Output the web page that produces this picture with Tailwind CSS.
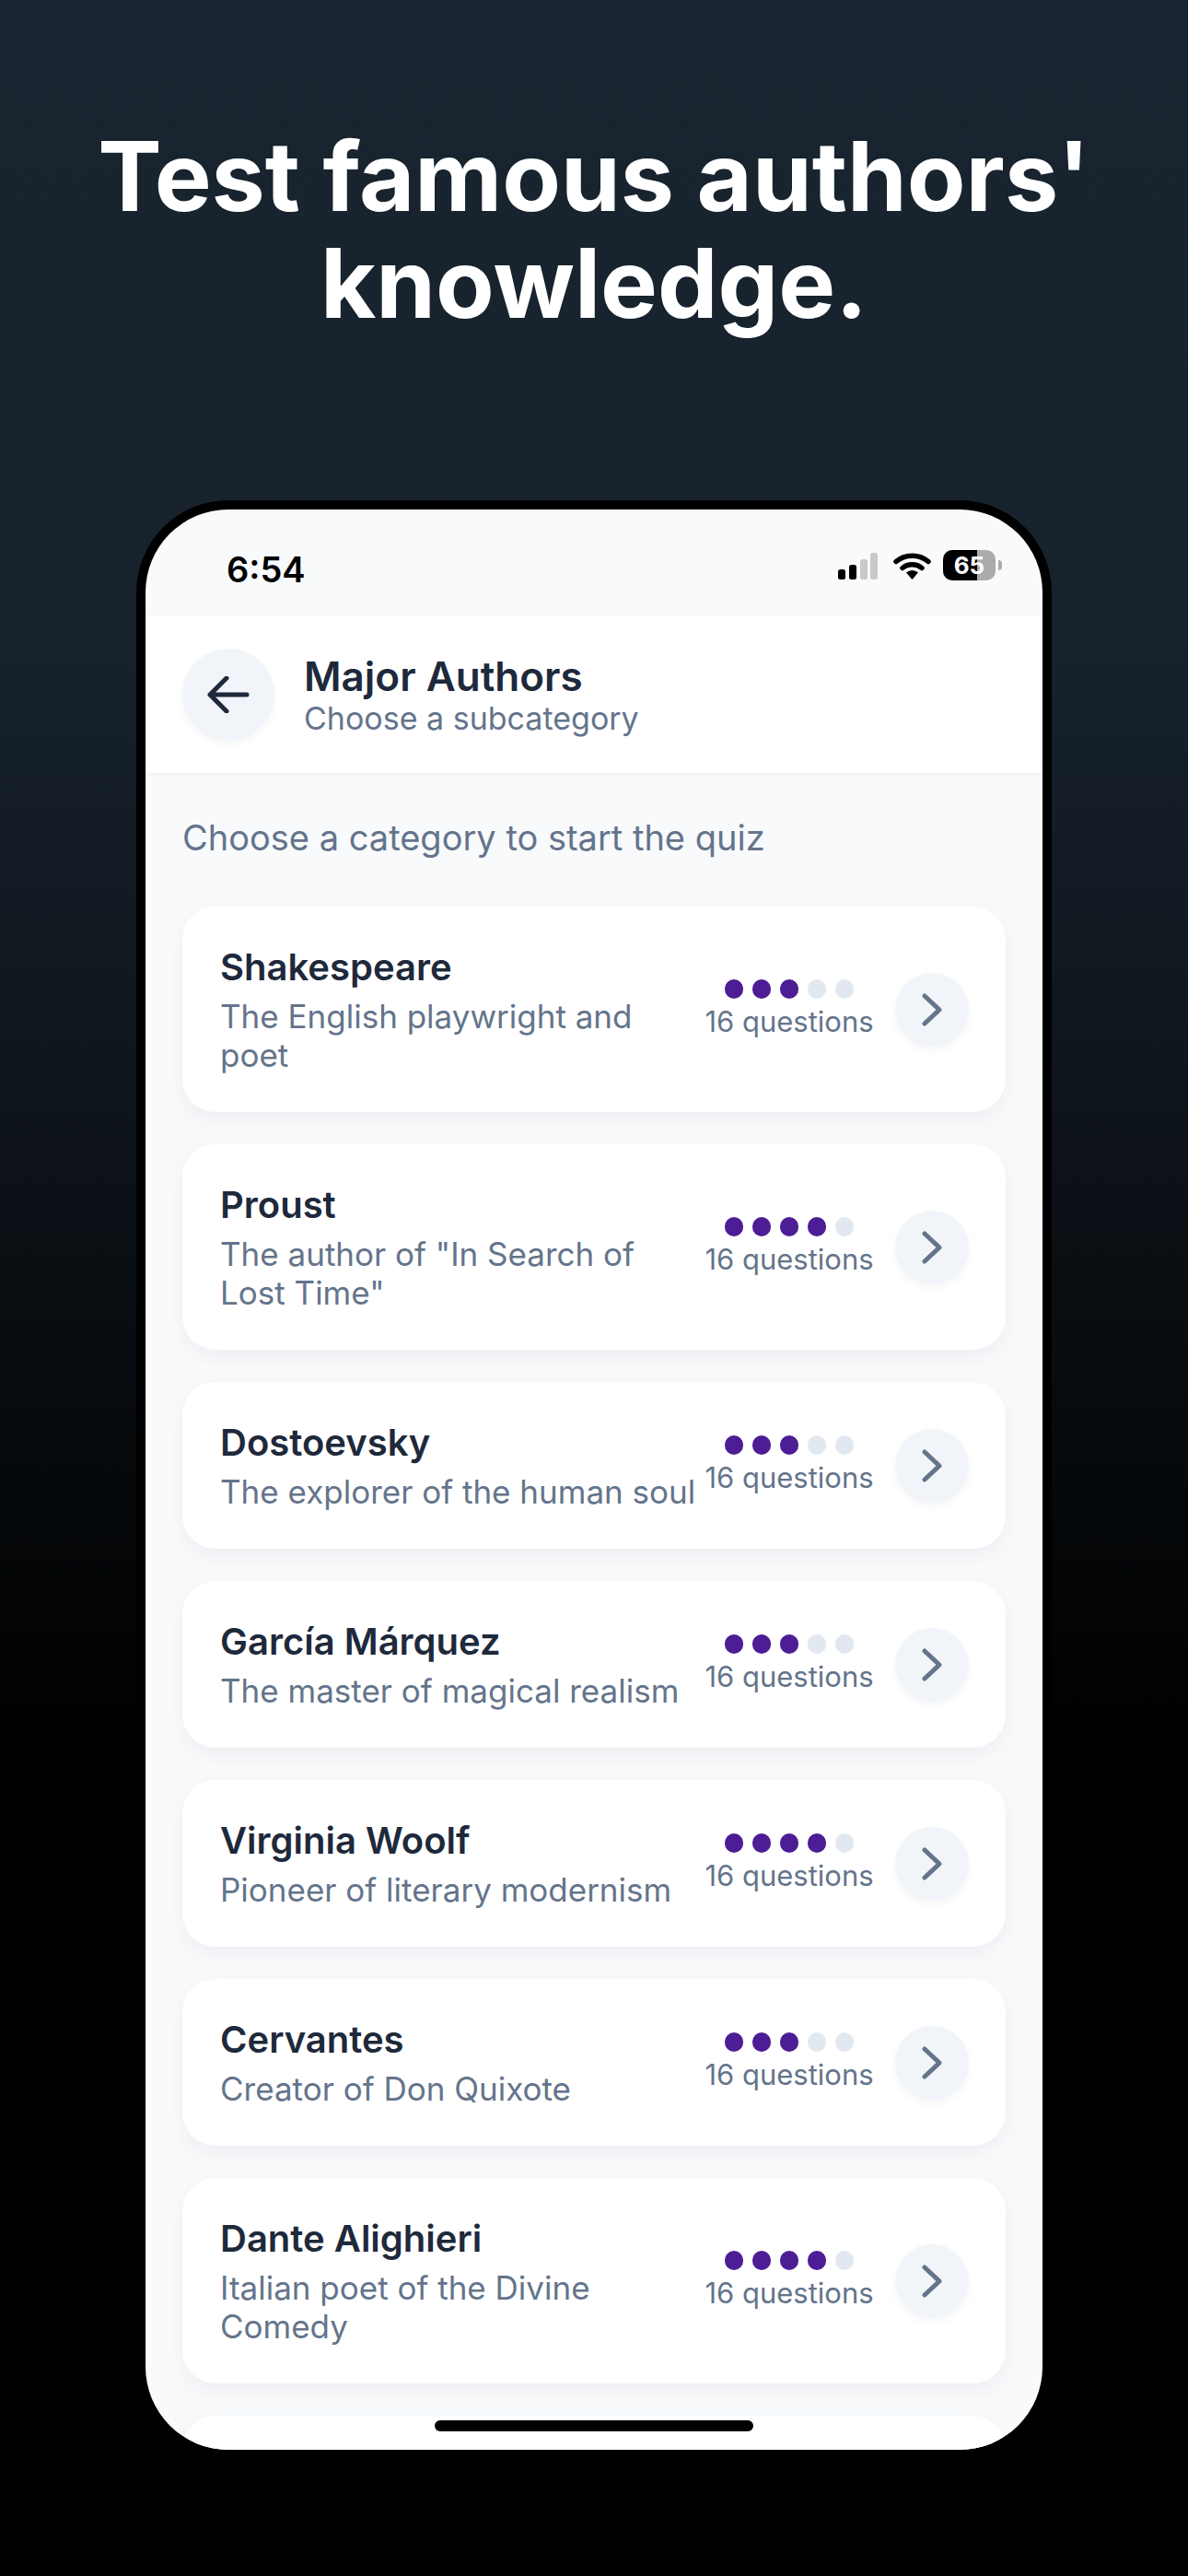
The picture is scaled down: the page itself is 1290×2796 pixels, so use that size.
<!DOCTYPE html>
<html lang="en">
<head>
  <meta charset="UTF-8">
  <meta name="viewport" content="width=device-width, initial-scale=1.0">
  <title>Major Authors</title>
  <script src="https://cdn.jsdelivr.net/npm/@tailwindcss/browser@4"></script>
</head>
<body class="h-[2796px] w-[1290px] overflow-hidden bg-[linear-gradient(180deg,#18242f_0%,#17222d_25%,#000000_68%)] font-['Inter',sans-serif]">
  <h1 class="pt-[133px] text-center text-[104px] leading-[116px] font-bold text-white">Test famous authors'<br>knowledge.</h1>

  <!-- phone -->
  <div class="mx-auto mt-[178px] h-[2126px] w-[994px] rounded-[100px] border-[10px] border-black bg-black">
    <div class="relative h-full overflow-hidden rounded-[90px] bg-[#f8fafc]">
      <div class="flex h-[116px] items-start justify-between pt-[42px] pl-[88px] pr-[44px]">
        <span class="text-[38px] leading-[46px] font-semibold text-black">6:54</span>
        <div class="flex items-center gap-[10px] pt-[2px]">
          <svg width="48" height="30" viewBox="0 0 48 30"><rect x="0" y="19" width="8" height="11" rx="2.5" fill="#000"/><rect x="12" y="14" width="8" height="16" rx="2.5" fill="#000"/><rect x="24" y="8" width="8" height="22" rx="2.5" fill="#c9c9c9"/><rect x="35" y="1" width="8" height="29" rx="2.5" fill="#c9c9c9"/></svg>
          <svg width="41" height="31" viewBox="0 0 41 31" class="ml-[2px]"><path d="M20.5 31 14 23.5a9.6 9.6 0 0 1 13 0Z" fill="#000"/><path d="M3 11.5C12.5 3 28.5 3 38 11.5" fill="none" stroke="#000" stroke-width="5.5" stroke-linecap="round"/><path d="M10 18.5c6-5 15-5 21 0" fill="none" stroke="#000" stroke-width="5.5" stroke-linecap="round"/></svg>
          <div class="relative ml-[3px] flex h-[33px] w-[57px] items-center justify-center overflow-hidden rounded-[10px] bg-[#ababab]">
            <div class="absolute inset-y-0 left-0 w-[37px] bg-black"></div>
            <span class="relative text-[26px] leading-[33px] font-bold text-white">65</span>
          </div>
          <div class="ml-[-7px] h-[11px] w-[4px] rounded-r-full bg-[#ababab]"></div>
        </div>
      </div>

      <header class="flex h-[170px] items-center gap-[32px] bg-white pl-[40px] shadow-[0_1px_4px_rgba(15,23,42,0.05)]">
        <div class="flex size-[100px] items-center justify-center rounded-full bg-[#f1f5f9] shadow-[0_4px_10px_rgba(15,23,42,0.04)]">
          <svg width="46" height="40" viewBox="0 0 46 40" fill="none" stroke="#1e293b" stroke-width="5" stroke-linecap="round" stroke-linejoin="round"><path d="M3 20h40M21 2 3 20l18 18"/></svg>
        </div>
        <div>
          <div class="text-[44px] leading-[52px] font-semibold text-[#1e293b]">Major Authors</div>
          <div class="text-[34px] leading-[40px] text-[#64748b]">Choose a subcategory</div>
        </div>
      </header>

      <main class="px-[40px] pt-[40px]">
        <p class="text-[38px] leading-[60px] text-[#64748b]">Choose a category to start the quiz</p>
        <div class="mt-[45px] flex flex-col gap-[35px]">

          <div class="flex items-center rounded-[36px] bg-white py-[41px] pr-[40px] pl-[41px] shadow-[0_8px_24px_rgba(15,23,42,0.05)]">
            <div class="min-w-0 flex-1 pr-[12px]">
              <div class="text-[40px] leading-[50px] font-semibold text-[#1e293b]">Shakespeare</div>
              <div class="mt-[7px] text-[35px] leading-[42px] text-[#64748b]">The English playwright and poet</div>
            </div>
            <div class="flex w-[178px] flex-col items-center gap-[6px]">
              <div class="flex gap-[9.5px]">
                <span class="size-[20.5px] rounded-full bg-[#4c1d95]"></span><span class="size-[20.5px] rounded-full bg-[#4c1d95]"></span><span class="size-[20.5px] rounded-full bg-[#4c1d95]"></span><span class="size-[20.5px] rounded-full bg-[#e2e8f0]"></span><span class="size-[20.5px] rounded-full bg-[#e2e8f0]"></span>
              </div>
              <div class="text-[31px] leading-[38px] whitespace-nowrap text-[#64748b]">16 questions</div>
            </div>
            <div class="ml-[26px] flex size-[80px] items-center justify-center rounded-full bg-[#f1f5f9] shadow-[0_4px_10px_rgba(15,23,42,0.04)]">
              <svg width="22" height="36" viewBox="0 0 22 36" fill="none" stroke="#64748b" stroke-width="5" stroke-linecap="round" stroke-linejoin="round"><path d="m3 3 16 15L3 33"/></svg>
            </div>
          </div>

          <div class="flex items-center rounded-[36px] bg-white py-[41px] pr-[40px] pl-[41px] shadow-[0_8px_24px_rgba(15,23,42,0.05)]">
            <div class="min-w-0 flex-1 pr-[12px]">
              <div class="text-[40px] leading-[50px] font-semibold text-[#1e293b]">Proust</div>
              <div class="mt-[7px] text-[35px] leading-[42px] text-[#64748b]">The author of "In Search of Lost Time"</div>
            </div>
            <div class="flex w-[178px] flex-col items-center gap-[6px]">
              <div class="flex gap-[9.5px]">
                <span class="size-[20.5px] rounded-full bg-[#4c1d95]"></span><span class="size-[20.5px] rounded-full bg-[#4c1d95]"></span><span class="size-[20.5px] rounded-full bg-[#4c1d95]"></span><span class="size-[20.5px] rounded-full bg-[#4c1d95]"></span><span class="size-[20.5px] rounded-full bg-[#e2e8f0]"></span>
              </div>
              <div class="text-[31px] leading-[38px] whitespace-nowrap text-[#64748b]">16 questions</div>
            </div>
            <div class="ml-[26px] flex size-[80px] items-center justify-center rounded-full bg-[#f1f5f9] shadow-[0_4px_10px_rgba(15,23,42,0.04)]">
              <svg width="22" height="36" viewBox="0 0 22 36" fill="none" stroke="#64748b" stroke-width="5" stroke-linecap="round" stroke-linejoin="round"><path d="m3 3 16 15L3 33"/></svg>
            </div>
          </div>

          <div class="flex items-center rounded-[36px] bg-white py-[41px] pr-[40px] pl-[41px] shadow-[0_8px_24px_rgba(15,23,42,0.05)]">
            <div class="min-w-0 flex-1 pr-[12px]">
              <div class="text-[40px] leading-[50px] font-semibold text-[#1e293b]">Dostoevsky</div>
              <div class="mt-[7px] text-[35px] leading-[42px] text-[#64748b]">The explorer of the human soul</div>
            </div>
            <div class="flex w-[178px] flex-col items-center gap-[6px]">
              <div class="flex gap-[9.5px]">
                <span class="size-[20.5px] rounded-full bg-[#4c1d95]"></span><span class="size-[20.5px] rounded-full bg-[#4c1d95]"></span><span class="size-[20.5px] rounded-full bg-[#4c1d95]"></span><span class="size-[20.5px] rounded-full bg-[#e2e8f0]"></span><span class="size-[20.5px] rounded-full bg-[#e2e8f0]"></span>
              </div>
              <div class="text-[31px] leading-[38px] whitespace-nowrap text-[#64748b]">16 questions</div>
            </div>
            <div class="ml-[26px] flex size-[80px] items-center justify-center rounded-full bg-[#f1f5f9] shadow-[0_4px_10px_rgba(15,23,42,0.04)]">
              <svg width="22" height="36" viewBox="0 0 22 36" fill="none" stroke="#64748b" stroke-width="5" stroke-linecap="round" stroke-linejoin="round"><path d="m3 3 16 15L3 33"/></svg>
            </div>
          </div>

          <div class="flex items-center rounded-[36px] bg-white py-[41px] pr-[40px] pl-[41px] shadow-[0_8px_24px_rgba(15,23,42,0.05)]">
            <div class="min-w-0 flex-1 pr-[12px]">
              <div class="text-[40px] leading-[50px] font-semibold text-[#1e293b]">García Márquez</div>
              <div class="mt-[7px] text-[35px] leading-[42px] text-[#64748b]">The master of magical realism</div>
            </div>
            <div class="flex w-[178px] flex-col items-center gap-[6px]">
              <div class="flex gap-[9.5px]">
                <span class="size-[20.5px] rounded-full bg-[#4c1d95]"></span><span class="size-[20.5px] rounded-full bg-[#4c1d95]"></span><span class="size-[20.5px] rounded-full bg-[#4c1d95]"></span><span class="size-[20.5px] rounded-full bg-[#e2e8f0]"></span><span class="size-[20.5px] rounded-full bg-[#e2e8f0]"></span>
              </div>
              <div class="text-[31px] leading-[38px] whitespace-nowrap text-[#64748b]">16 questions</div>
            </div>
            <div class="ml-[26px] flex size-[80px] items-center justify-center rounded-full bg-[#f1f5f9] shadow-[0_4px_10px_rgba(15,23,42,0.04)]">
              <svg width="22" height="36" viewBox="0 0 22 36" fill="none" stroke="#64748b" stroke-width="5" stroke-linecap="round" stroke-linejoin="round"><path d="m3 3 16 15L3 33"/></svg>
            </div>
          </div>

          <div class="flex items-center rounded-[36px] bg-white py-[41px] pr-[40px] pl-[41px] shadow-[0_8px_24px_rgba(15,23,42,0.05)]">
            <div class="min-w-0 flex-1 pr-[12px]">
              <div class="text-[40px] leading-[50px] font-semibold text-[#1e293b]">Virginia Woolf</div>
              <div class="mt-[7px] text-[35px] leading-[42px] text-[#64748b]">Pioneer of literary modernism</div>
            </div>
            <div class="flex w-[178px] flex-col items-center gap-[6px]">
              <div class="flex gap-[9.5px]">
                <span class="size-[20.5px] rounded-full bg-[#4c1d95]"></span><span class="size-[20.5px] rounded-full bg-[#4c1d95]"></span><span class="size-[20.5px] rounded-full bg-[#4c1d95]"></span><span class="size-[20.5px] rounded-full bg-[#4c1d95]"></span><span class="size-[20.5px] rounded-full bg-[#e2e8f0]"></span>
              </div>
              <div class="text-[31px] leading-[38px] whitespace-nowrap text-[#64748b]">16 questions</div>
            </div>
            <div class="ml-[26px] flex size-[80px] items-center justify-center rounded-full bg-[#f1f5f9] shadow-[0_4px_10px_rgba(15,23,42,0.04)]">
              <svg width="22" height="36" viewBox="0 0 22 36" fill="none" stroke="#64748b" stroke-width="5" stroke-linecap="round" stroke-linejoin="round"><path d="m3 3 16 15L3 33"/></svg>
            </div>
          </div>

          <div class="flex items-center rounded-[36px] bg-white py-[41px] pr-[40px] pl-[41px] shadow-[0_8px_24px_rgba(15,23,42,0.05)]">
            <div class="min-w-0 flex-1 pr-[12px]">
              <div class="text-[40px] leading-[50px] font-semibold text-[#1e293b]">Cervantes</div>
              <div class="mt-[7px] text-[35px] leading-[42px] text-[#64748b]">Creator of Don Quixote</div>
            </div>
            <div class="flex w-[178px] flex-col items-center gap-[6px]">
              <div class="flex gap-[9.5px]">
                <span class="size-[20.5px] rounded-full bg-[#4c1d95]"></span><span class="size-[20.5px] rounded-full bg-[#4c1d95]"></span><span class="size-[20.5px] rounded-full bg-[#4c1d95]"></span><span class="size-[20.5px] rounded-full bg-[#e2e8f0]"></span><span class="size-[20.5px] rounded-full bg-[#e2e8f0]"></span>
              </div>
              <div class="text-[31px] leading-[38px] whitespace-nowrap text-[#64748b]">16 questions</div>
            </div>
            <div class="ml-[26px] flex size-[80px] items-center justify-center rounded-full bg-[#f1f5f9] shadow-[0_4px_10px_rgba(15,23,42,0.04)]">
              <svg width="22" height="36" viewBox="0 0 22 36" fill="none" stroke="#64748b" stroke-width="5" stroke-linecap="round" stroke-linejoin="round"><path d="m3 3 16 15L3 33"/></svg>
            </div>
          </div>

          <div class="flex items-center rounded-[36px] bg-white py-[41px] pr-[40px] pl-[41px] shadow-[0_8px_24px_rgba(15,23,42,0.05)]">
            <div class="min-w-0 flex-1 pr-[12px]">
              <div class="text-[40px] leading-[50px] font-semibold text-[#1e293b]">Dante Alighieri</div>
              <div class="mt-[7px] w-[420px] text-[35px] leading-[42px] text-[#64748b]">Italian poet of the Divine Comedy</div>
            </div>
            <div class="flex w-[178px] flex-col items-center gap-[6px]">
              <div class="flex gap-[9.5px]">
                <span class="size-[20.5px] rounded-full bg-[#4c1d95]"></span><span class="size-[20.5px] rounded-full bg-[#4c1d95]"></span><span class="size-[20.5px] rounded-full bg-[#4c1d95]"></span><span class="size-[20.5px] rounded-full bg-[#4c1d95]"></span><span class="size-[20.5px] rounded-full bg-[#e2e8f0]"></span>
              </div>
              <div class="text-[31px] leading-[38px] whitespace-nowrap text-[#64748b]">16 questions</div>
            </div>
            <div class="ml-[26px] flex size-[80px] items-center justify-center rounded-full bg-[#f1f5f9] shadow-[0_4px_10px_rgba(15,23,42,0.04)]">
              <svg width="22" height="36" viewBox="0 0 22 36" fill="none" stroke="#64748b" stroke-width="5" stroke-linecap="round" stroke-linejoin="round"><path d="m3 3 16 15L3 33"/></svg>
            </div>
          </div>

          <div class="flex items-center rounded-[36px] bg-white py-[41px] pr-[40px] pl-[41px] shadow-[0_8px_24px_rgba(15,23,42,0.05)]">
            <div class="min-w-0 flex-1 pr-[12px]">
              <div class="text-[40px] leading-[50px] font-semibold text-[#1e293b]">Goethe</div>
              <div class="mt-[7px] h-[84px]"></div>
            </div>
            <div class="flex w-[178px] flex-col items-center gap-[6px]">
              <div class="flex gap-[9.5px]">
                <span class="size-[20.5px] rounded-full bg-[#4c1d95]"></span><span class="size-[20.5px] rounded-full bg-[#4c1d95]"></span><span class="size-[20.5px] rounded-full bg-[#4c1d95]"></span><span class="size-[20.5px] rounded-full bg-[#4c1d95]"></span><span class="size-[20.5px] rounded-full bg-[#e2e8f0]"></span>
              </div>
              <div class="h-[38px]"></div>
            </div>
            <div class="ml-[26px] size-[80px] rounded-full bg-[#f1f5f9] shadow-[0_4px_10px_rgba(15,23,42,0.04)]"></div>
          </div>

        </div>
      </main>

      <div class="absolute bottom-[20px] left-[314px] h-[12px] w-[346px] rounded-full bg-black"></div>
    </div>
  </div>
</body>
</html>
